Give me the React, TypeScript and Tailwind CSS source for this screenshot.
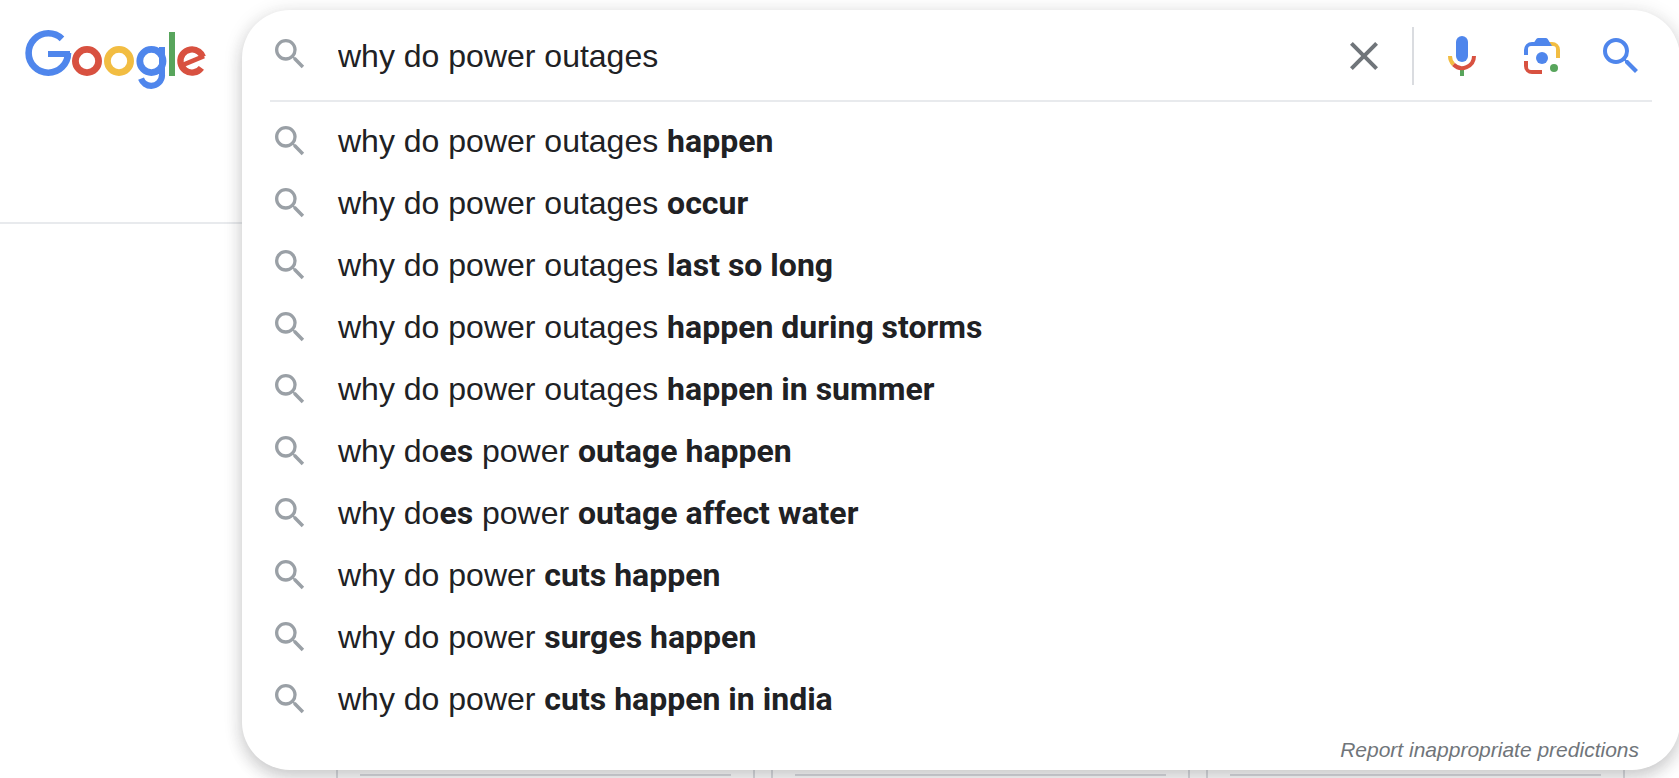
import { JSX, useState } from 'react'

type Part = { text: string; bold?: boolean }

const suggestions: Part[][] = [
  [{ text: 'why do power outages ' }, { text: 'happen', bold: true }],
  [{ text: 'why do power outages ' }, { text: 'occur', bold: true }],
  [{ text: 'why do power outages ' }, { text: 'last so long', bold: true }],
  [{ text: 'why do power outages ' }, { text: 'happen during storms', bold: true }],
  [{ text: 'why do power outages ' }, { text: 'happen in summer', bold: true }],
  [
    { text: 'why do' },
    { text: 'es', bold: true },
    { text: ' power ' },
    { text: 'outage happen', bold: true }
  ],
  [
    { text: 'why do' },
    { text: 'es', bold: true },
    { text: ' power ' },
    { text: 'outage affect water', bold: true }
  ],
  [{ text: 'why do power ' }, { text: 'cuts happen', bold: true }],
  [{ text: 'why do power ' }, { text: 'surges happen', bold: true }],
  [{ text: 'why do power ' }, { text: 'cuts happen in india', bold: true }]
]

const SearchIcon = ({ className }: { className: string }): JSX.Element => (
  <svg viewBox="0 0 24 24" className={className} fill="currentColor" aria-hidden="true">
    <path d="M15.5 14h-.79l-.28-.27A6.471 6.471 0 0 0 16 9.5 6.5 6.5 0 1 0 9.5 16c1.61 0 3.09-.59 4.23-1.57l.27.28v.79l5 4.99L20.49 19l-4.99-5zm-6 0C7.01 14 5 11.99 5 9.5S7.01 5 9.5 5 14 7.01 14 9.5 11.99 14 9.5 14z" />
  </svg>
)

const CloseIcon = (): JSX.Element => (
  <svg viewBox="0 0 24 24" className="size-12" fill="currentColor" aria-hidden="true">
    <path d="M19 6.41L17.59 5 12 10.59 6.41 5 5 6.41 10.59 12 5 17.59 6.41 19 12 13.41 17.59 19 19 17.59 13.41 12z" />
  </svg>
)

const MicIcon = (): JSX.Element => (
  <svg viewBox="0 0 24 24" className="size-12" fill="none" strokeWidth="2" aria-hidden="true">
    <rect x="9" y="2" width="6" height="13" rx="3" fill="#4f86ec" />
    <path fill="#58a55c" d="M11 18.5h2V22h-2z" />
    <path stroke="#f2bd42" d="M6 12a6 6 0 0 0 1.76 4.24" />
    <path stroke="#d85140" d="M7.76 16.24A6 6 0 0 0 18 12" />
  </svg>
)

const LensIcon = (): JSX.Element => (
  <svg viewBox="0 0 144 144" className="size-12" aria-hidden="true">
    <circle cx="72" cy="78" r="18" fill="#4f86ec" />
    <circle cx="108" cy="108" r="12" fill="#58a55c" />
    <path fill="#d85140" d="M18 87h12v18a9 9 0 0 0 9 9h33v12H42a24 24 0 0 1-24-24z" />
    <path fill="#f2bd42" d="M90 30h12a24 24 0 0 1 24 24v24h-12V51a9 9 0 0 0-9-9H96z" />
    <path fill="#4f86ec" d="M18 69V54a24 24 0 0 1 24-24h7l6-9q2-3 6-3h22q4 0 6 3l13 21H39a9 9 0 0 0-9 9v18z" />
  </svg>
)

const Logo = (): JSX.Element => (
  <svg viewBox="0 0 182 60" className="h-[60px] w-[182px]" fill="none" role="img" aria-label="Google">
    <g stroke="#4f86ec" strokeWidth="6.6">
      <circle cx="23.3" cy="23" r="19.7" pathLength="360" strokeDasharray="314 90" />
      <line x1="23" y1="24" x2="45" y2="24" strokeWidth="6" />
    </g>
    <circle cx="62" cy="31" r="11.6" stroke="#d85140" strokeWidth="6.8" />
    <circle cx="94" cy="31" r="11.6" stroke="#f2bd42" strokeWidth="6.8" />
    <g stroke="#4f86ec">
      <circle cx="126.4" cy="31" r="11.6" strokeWidth="6.8" />
      <line x1="137" y1="17" x2="137" y2="45.5" strokeWidth="6" />
      <circle cx="126.2" cy="45" r="10.8" strokeWidth="6.2" pathLength="360" strokeDasharray="160 240" />
    </g>
    <line x1="147" y1="2" x2="147" y2="46" stroke="#58a55c" strokeWidth="6" />
    <g stroke="#d85140">
      <circle
        cx="167"
        cy="31"
        r="11.6"
        strokeWidth="6.4"
        pathLength="360"
        strokeDasharray="303 90"
        transform="rotate(36 167 31)"
      />
      <line x1="158" y1="34.8" x2="179" y2="26.2" strokeWidth="4.6" />
    </g>
  </svg>
)

// search results that sit behind the open dropdown
const ResultCards = (): JSX.Element => (
  <div className="absolute inset-x-0 top-[760px] bottom-0 overflow-hidden">
    <div className="ml-[336px] flex gap-4">
      {[0, 1, 2].map((i) => (
        <div key={i} className="h-16 w-[419px] shrink-0 border-x-2 border-[#dadce0] px-[22px] pt-3.5">
          <div className="h-0.5 bg-[#dadce0]" />
        </div>
      ))}
    </div>
  </div>
)

export default function App(): JSX.Element {
  const [query, setQuery] = useState('why do power outages')

  return (
    <div className="relative min-h-screen overflow-hidden bg-white font-['Liberation_Sans',Arial,sans-serif] text-[#202124]">
      <div className="absolute inset-x-0 top-[222px] h-0.5 bg-[#e8eaed]" />
      <ResultCards />
      <div className="relative flex items-start pt-2.5 pb-2">
        <a href="#" className="ml-[25px] mt-5 w-[217px] shrink-0">
          <Logo />
        </a>
        <main className="-mr-px min-w-0 flex-1 rounded-[48px] bg-white shadow-[0_2px_20px_rgba(32,33,36,0.12),0_8px_16px_rgba(32,33,36,0.16)]">
          <form
            className="mx-7 flex h-[92px] items-center border-b-2 border-[#e8eaed] pt-0.5"
            onSubmit={(e) => e.preventDefault()}
          >
            <SearchIcon className="mb-1 size-10 shrink-0 text-[#9aa0a6]" />
            <input
              type="text"
              aria-label="Search"
              value={query}
              onChange={(e) => setQuery(e.target.value)}
              className="ml-7 min-w-0 flex-1 text-[32px] leading-10 outline-none"
            />
            <button type="button" aria-label="Clear" onClick={() => setQuery('')} className="text-[#70757a]">
              <CloseIcon />
            </button>
            <div className="mx-6 h-[58px] w-0.5 bg-[#dadce0]" />
            <button type="button" aria-label="Search by voice">
              <MicIcon />
            </button>
            <button type="button" aria-label="Search by image" className="ml-8">
              <LensIcon />
            </button>
            <button type="submit" aria-label="Search" className="mr-[7px] ml-[31px] text-[#4f86ec]">
              <SearchIcon className="size-12" />
            </button>
          </form>
          <ul className="px-7 pt-2">
            {suggestions.map((parts, i) => (
              <li key={i} className="flex h-[62px] items-center">
                <SearchIcon className="size-10 shrink-0 text-[#9aa0a6]" />
                <span className="ml-7 text-[32px] leading-10 whitespace-pre">
                  {parts.map((part, j) =>
                    part.bold ? (
                      <b key={j} className="font-[Roboto,sans-serif] font-bold">
                        {part.text}
                      </b>
                    ) : (
                      part.text
                    )
                  )}
                </span>
              </li>
            ))}
          </ul>
          <div className="flex h-10 items-center justify-end pr-[41px] text-[#70757a]">
            <a href="#" className="text-[21px] leading-6 italic">
              Report inappropriate predictions
            </a>
          </div>
        </main>
      </div>
    </div>
  )
}
